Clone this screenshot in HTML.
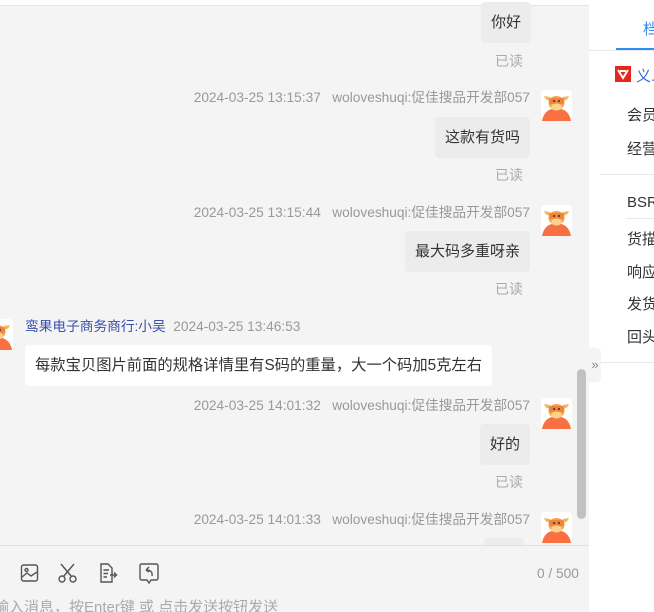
<!DOCTYPE html><html><head><meta charset="utf-8"><style>
*{margin:0;padding:0;box-sizing:border-box}
html,body{width:654px;height:612px;overflow:hidden}
body{background:#f4f4f4;font-family:"Liberation Sans","Noto Sans CJK SC",sans-serif;position:relative;color:#333}
.a{position:absolute;white-space:nowrap}
.meta{font-size:13.7px;color:#999;line-height:16px}
.bub{background:#ececec;border-radius:4px;font-size:15px;line-height:41px;padding:0 10px;color:#333}
.rd{font-size:14px;color:#aaa}
.rp{position:absolute;left:589px;top:0;width:65px;height:612px;background:#fff}
.rt{font-size:15px;color:#333;left:627px}
</style></head><body>
<div class="a" style="left:0;top:0;width:589px;height:6px;background:#fff;border-bottom:1px solid #e4e4e4"></div>
<svg width="0" height="0" style="position:absolute"><defs><symbol id="cow" viewBox="0 0 31 31"><rect width="31" height="31" rx="4" fill="#fff"/><path d="M1 31 Q3 19 15.5 18 Q28 19 30 31Z" fill="#f97042"/><path d="M3 6 Q5 12 11 10 L9 7Z M28 6 Q26 12 20 10 L22 7Z" fill="#f5b560"/><ellipse cx="15.5" cy="13" rx="8" ry="7" fill="#f7a24c"/><rect x="8" y="8" width="15" height="6" rx="2" fill="#f0843a"/><circle cx="13" cy="11" r="1" fill="#333"/><circle cx="18" cy="11" r="1" fill="#333"/><ellipse cx="15.5" cy="17" rx="5.5" ry="3.5" fill="#fbd38a"/></symbol></defs></svg>

<div class="a bub" style="left:481px;top:2px;">你好</div>
<div class="a rd" style="left:495px;top:51px">已读</div>

<div class="a meta" style="right:124px;top:90px">2024-03-25 13:15:37&nbsp;&nbsp;&nbsp;woloveshuqi:促佳搜品开发部057</div>
<svg class="a" style="left:541px;top:90px" width="31" height="31"><use href="#cow"/></svg>
<div class="a bub" style="right:124px;top:117px">这款有货吗</div>
<div class="a rd" style="left:495px;top:165px">已读</div>

<div class="a meta" style="right:124px;top:205px">2024-03-25 13:15:44&nbsp;&nbsp;&nbsp;woloveshuqi:促佳搜品开发部057</div>
<svg class="a" style="left:541px;top:205px" width="31" height="31"><use href="#cow"/></svg>
<div class="a bub" style="right:124px;top:231px">最大码多重呀亲</div>
<div class="a rd" style="left:495px;top:279px">已读</div>

<svg class="a" style="left:-18px;top:319px" width="31" height="31"><use href="#cow"/></svg>
<div class="a meta" style="left:25px;top:319px"><span style="color:#3b4fa8">鸾果电子商务商行:小吴</span>&nbsp;&nbsp;2024-03-25 13:46:53</div>
<div class="a bub" style="left:25px;top:345px;background:#fff;font-size:15.3px">每款宝贝图片前面的规格详情里有S码的重量，大一个码加5克左右</div>

<div class="a meta" style="right:124px;top:398px">2024-03-25 14:01:32&nbsp;&nbsp;&nbsp;woloveshuqi:促佳搜品开发部057</div>
<svg class="a" style="left:541px;top:398px" width="31" height="31"><use href="#cow"/></svg>
<div class="a bub" style="right:124px;top:424px">好的</div>
<div class="a rd" style="left:495px;top:472px">已读</div>

<div class="a meta" style="right:124px;top:512px">2024-03-25 14:01:33&nbsp;&nbsp;&nbsp;woloveshuqi:促佳搜品开发部057</div>
<svg class="a" style="left:541px;top:512px" width="31" height="31"><use href="#cow"/></svg>
<div class="a" style="left:484px;top:538px;width:40px;height:7px;background:#ececec;border-radius:4px 4px 0 0"></div>

<div class="a" style="left:577px;top:369px;width:9px;height:150px;background:#c1c1c1;border-radius:5px"></div>
<div class="a" style="left:0;top:545px;width:589px;height:67px;background:#f4f4f4;border-top:1px solid #e0e0e0"></div>

<svg class="a" style="left:20px;top:562px" width="150" height="24" fill="none" stroke="#555" stroke-width="1.4">
<rect x="1.5" y="3" width="16" height="16" rx="2"/><path d="M2 15 L7 11 L11 14 L17 10"/><circle cx="6.5" cy="8" r="1.5"/>
<circle cx="42" cy="17" r="3"/><circle cx="53" cy="17" r="3"/><path d="M43.5 14.5 L54 2 M51.5 14.5 L41 2"/>
<path d="M81 2 H88 L92 6 V20 H81Z M83.5 8 H89 M83.5 11.5 H88 M83.5 15 H87 M90 13 H96 M94 10.5 L96.5 13 L94 15.5"/>
<path d="M122 2 H136 Q138 2 138 4 V16 Q138 18 136 18 H131 L129 21 L127 18 H122 Q120 18 120 16 V4 Q120 2 122 2Z M126 8 L129 5 M126 8 L129 10 M126 8 Q133 8 132 14"/>
</svg>
<div class="a meta" style="left:537px;top:566px;color:#999">0 / 500</div>
<div class="a" style="left:-6px;top:596px;font-size:15px;color:#aaa">输入消息，按Enter键 或 点击发送按钮发送</div>

<div class="rp"></div>
<div class="a" style="left:589px;top:50px;width:65px;height:1px;background:#e8e8e8"></div>
<div class="a" style="left:643px;top:18px;font-size:15px;color:#2f8cf0">档</div>
<div class="a" style="left:616px;top:48px;width:38px;height:2px;background:#2f8cf0"></div>
<svg class="a" style="left:615px;top:66px" width="16" height="16"><rect width="16" height="16" fill="#e4261c"/><path d="M3 4 L8 12 L13 4 M5 5 H11" stroke="#fff" stroke-width="2" fill="none"/></svg>
<div class="a" style="left:636px;top:65px;font-size:15px;color:#2f6fd8">义...</div>
<div class="a rt" style="top:104px">会员</div>
<div class="a rt" style="top:138px">经营</div>
<div class="a" style="left:600px;top:174px;width:54px;height:1px;background:#e8e8e8"></div>
<div class="a rt" style="top:194px">BSR</div>
<div class="a" style="left:626px;top:218px;width:28px;height:1px;background:#e8e8e8"></div>
<div class="a rt" style="top:228px">货描</div>
<div class="a rt" style="top:261px">响应</div>
<div class="a rt" style="top:293px">发货</div>
<div class="a rt" style="top:326px">回头</div>
<div class="a" style="left:600px;top:362px;width:54px;height:1px;background:#e8e8e8"></div>
<div class="a" style="left:589px;top:348px;width:12px;height:34px;background:#f4f4f4;border-radius:0 5px 5px 0;font-size:13px;color:#888;line-height:34px;text-align:center">»</div>
</body></html>
